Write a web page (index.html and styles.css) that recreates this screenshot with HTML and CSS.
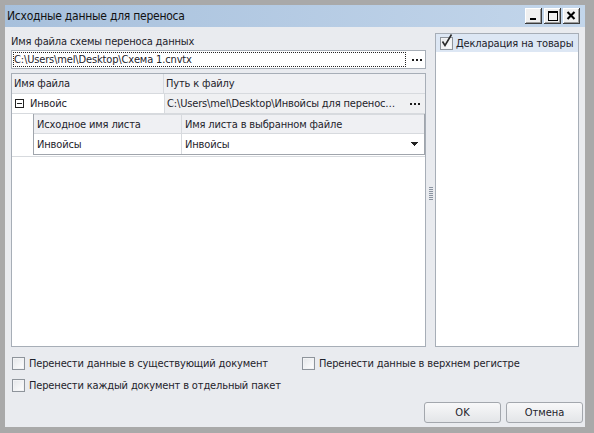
FILE: index.html
```html
<!DOCTYPE html>
<html lang="ru">
<head>
<meta charset="utf-8">
<title>Исходные данные для переноса</title>
<link rel="stylesheet" href="styles.css">
</head>
<body>
<div class="window">
  <div class="titlebar">
    <span class="title">Исходные данные для переноса</span>
    <div class="caption-buttons">
      <span class="cbtn">
        <svg width="17" height="16" viewBox="0 0 17 16" shape-rendering="crispEdges"><rect x="5" y="10" width="6" height="2" fill="#000"/></svg>
      </span>
      <span class="cbtn">
        <svg width="17" height="16" viewBox="0 0 17 16" shape-rendering="crispEdges"><rect x="4" y="3" width="9" height="9" fill="none" stroke="#000" stroke-width="1" transform="translate(0.5 0.5)"/><rect x="4" y="3" width="10" height="2" fill="#000"/></svg>
      </span>
      <span class="cbtn close">
        <svg width="17" height="16" viewBox="0 0 17 16"><path d="M4.5 4 L11.5 11 M11.5 4 L4.5 11" stroke="#000" stroke-width="2.1" fill="none"/></svg>
      </span>
    </div>
  </div>

  <div class="client">
    <div class="main">
      <div class="left">
        <div class="field-label">Имя файла схемы переноса данных</div>
        <div class="file-input">
          <div class="file-text">C:\Users\mel\Desktop\Схема 1.cnvtx</div>
          <span class="dots-btn">
            <svg width="10" height="2" viewBox="0 0 10 2" shape-rendering="crispEdges"><rect x="0" y="0" width="2" height="2" fill="#1a1a1a"/><rect x="4" y="0" width="2" height="2" fill="#1a1a1a"/><rect x="8" y="0" width="2" height="2" fill="#1a1a1a"/></svg>
          </span>
        </div>

        <div class="grid">
          <div class="grid-row grid-head">
            <div class="cell col-name">Имя файла</div>
            <div class="cell col-path">Путь к файлу</div>
          </div>
          <div class="grid-row">
            <div class="cell col-name">
              <svg class="expander" width="9" height="9" viewBox="0 0 9 9" shape-rendering="crispEdges"><rect x="0.5" y="0.5" width="8" height="8" fill="#fff" stroke="#222"/><rect x="2" y="4" width="5" height="1" fill="#222"/></svg>
              Инвойс
            </div>
            <div class="cell col-path path-cell">
              <span class="path-text">C:\Users\mel\Desktop\Инвойсы для перенос…</span>
              <svg class="cell-dots" width="10" height="2" viewBox="0 0 10 2" shape-rendering="crispEdges"><rect x="0" y="0" width="2" height="2" fill="#1a1a1a"/><rect x="4" y="0" width="2" height="2" fill="#1a1a1a"/><rect x="8" y="0" width="2" height="2" fill="#1a1a1a"/></svg>
            </div>
          </div>
          <div class="detail">
            <div class="subgrid">
              <div class="sub-row sub-head">
                <div class="sub-cell sub-src">Исходное имя листа</div>
                <div class="sub-cell sub-dst">Имя листа в выбранном файле</div>
              </div>
              <div class="sub-row">
                <div class="sub-cell sub-src">Инвойсы</div>
                <div class="sub-cell sub-dst combo">
                  <span>Инвойсы</span>
                  <svg width="7" height="4" viewBox="0 0 7 4" shape-rendering="crispEdges"><path d="M0 0 H7 L3.5 4 Z" fill="#222"/></svg>
                </div>
              </div>
            </div>
          </div>
          <div class="grid-fill"></div>
        </div>
      </div>

      <div class="splitter"><span class="grip"></span></div>

      <div class="side-list">
        <div class="list-item selected">
          <span class="check checked">
            <svg width="15" height="16" viewBox="0 0 15 16"><path d="M3.5 8.5 L6 12.5 L12.5 1.5" stroke="#2a2a2a" stroke-width="1.6" fill="none" stroke-linejoin="miter"/></svg>
          </span>
          Декларация на товары
        </div>
      </div>
    </div>

    <div class="options">
      <label class="opt"><span class="check"></span>Перенести данные в существующий документ</label>
      <label class="opt"><span class="check"></span>Перенести данные в верхнем регистре</label>
      <label class="opt"><span class="check"></span>Перенести каждый документ в отдельный пакет</label>
    </div>

    <div class="buttons">
      <button class="btn" type="button">OK</button>
      <button class="btn" type="button">Отмена</button>
    </div>
  </div>
</div>
</body>
</html>
```

FILE: styles.css
```css
* {
  box-sizing: border-box;
}

html, body {
  margin: 0;
  padding: 0;
}

body {
  width: 594px;
  height: 433px;
  overflow: hidden;
  font-family: "DejaVu Sans Condensed", "DejaVu Sans", sans-serif;
  font-size: 11px;
  letter-spacing: -0.15px;
  color: #1e232b;
}

/* outer window frame */
.window {
  width: 594px;
  height: 433px;
  padding: 5px 9px 6px 5px;
  background: #a9a9a9;
  display: flex;
  flex-direction: column;
}

.titlebar {
  height: 22px;
  flex: none;
  display: flex;
  align-items: center;
  justify-content: space-between;
  padding: 0 5px 0 2px;
  background: linear-gradient(to right, #a7c0dc, #c3d6eb);
}

.title {
  font-size: 12px;
  letter-spacing: -0.25px;
  color: #111;
}

.caption-buttons {
  display: flex;
  gap: 2px;
}

.cbtn {
  width: 17px;
  height: 16px;
  display: block;
  background: #f0f0f0;
  box-shadow: inset -1px -1px #3c3c3c, inset 1px 1px #ffffff, inset -2px -2px #9c9c9c;
}

.cbtn svg {
  display: block;
}

/* dialog body */
.client {
  height: 400px;
  flex: none;
  background: #e9ebef;
  padding: 6px 6px 4px 6px;
  display: flex;
  flex-direction: column;
}

.main {
  flex: 1;
  display: flex;
  min-height: 0;
}

.left {
  width: 415px;
  display: flex;
  flex-direction: column;
}

.field-label {
  height: 17px;
  line-height: 17px;
}

.file-input {
  height: 19px;
  border: 1px solid #a7aeb7;
  background: #fff;
  display: flex;
  align-items: center;
  padding: 1px 3px 1px 1px;
}

.file-text {
  flex: 1;
  height: 15px;
  line-height: 13px;
  border: 1px dotted #222;
  white-space: nowrap;
}

.dots-btn {
  width: 16px;
  display: flex;
  justify-content: flex-end;
  align-items: center;
}

.dots-btn svg {
  display: block;
}

/* main data grid */
.grid {
  margin-top: 4px;
  flex: 1;
  border: 1px solid #a7aeb7;
  background: #fff;
  display: flex;
  flex-direction: column;
}

.grid-row {
  display: flex;
  height: 20px;
  border-bottom: 1px solid #d7dade;
}

.grid-head {
  background: #eff0f3;
}

.cell {
  display: flex;
  align-items: center;
  white-space: nowrap;
  overflow: hidden;
}

.col-name {
  width: 152px;
  padding-left: 2px;
  border-right: 1px solid #d7dade;
}

.col-path {
  flex: 1;
  padding-left: 2px;
}

.grid-row:not(.grid-head) .col-name {
  border-right: none;
}

.expander {
  display: block;
  margin: 0 6px 0 1px;
  flex: none;
}

.path-cell {
  background: #eff0f2;
  padding-right: 5px;
  border-left: 1px solid #d7dade;
}

.path-text {
  flex: 1;
  white-space: nowrap;
}

.cell-dots {
  flex: none;
  display: block;
}

.detail {
  padding: 0 0 1px 21px;
  border-bottom: 1px solid #d7dade;
}

.subgrid {
  border: 1px solid #a0a5ac;
  border-top: none;
}

.sub-row {
  display: flex;
  height: 20px;
}

.sub-head {
  background: #eff0f3;
  border-bottom: 1px solid #d7dade;
  border-top: 1px solid #d7dade;
}

.sub-cell {
  display: flex;
  align-items: center;
  white-space: nowrap;
  padding-left: 3px;
}

.sub-src {
  width: 148px;
  border-right: 1px solid #d7dade;
}

.sub-dst {
  flex: 1;
}

.combo {
  justify-content: space-between;
  padding-right: 6px;
}

.combo svg {
  display: block;
}

.grid-fill {
  flex: 1;
}

/* vertical splitter between grid and list */
.splitter {
  width: 9px;
  flex: none;
  display: flex;
  align-items: center;
  justify-content: center;
}

.grip {
  width: 4px;
  height: 14px;
  margin-left: 1px;
  margin-top: 7px;
  background: repeating-linear-gradient(to bottom, #8a93a0 0 1px, transparent 1px 2px);
}

/* document type list */
.side-list {
  flex: 1;
  border: 1px solid #a7aeb7;
  background: #fff;
}

.list-item {
  height: 18px;
  display: flex;
  align-items: center;
  gap: 3px;
  padding-left: 4px;
  white-space: nowrap;
}

.list-item.selected {
  background: #dde7f4;
}

/* checkboxes */
.check {
  position: relative;
  width: 13px;
  height: 13px;
  flex: none;
  border: 1px solid #8e949b;
  background: linear-gradient(135deg, #e4e6e9, #ffffff);
  box-shadow: inset 0 0 0 1px #f2f3f5;
}

.check.checked svg {
  position: absolute;
  left: -2px;
  top: -5px;
}

.options {
  margin-top: 5px;
  display: grid;
  grid-template-columns: 290px 1fr;
  grid-auto-rows: 22px;
  padding-left: 1px;
}

.opt {
  display: flex;
  align-items: center;
  gap: 4px;
  white-space: nowrap;
}

.buttons {
  margin-top: 6px;
  margin-right: -4px;
  display: flex;
  justify-content: flex-end;
  gap: 5px;
}

.btn {
  width: 77px;
  height: 21px;
  padding: 0;
  font: inherit;
  color: #1e232b;
  border: 1px solid #a3a7ad;
  border-radius: 3px;
  background: linear-gradient(to bottom, #f8f8f9, #e3e5e8);
}
```
